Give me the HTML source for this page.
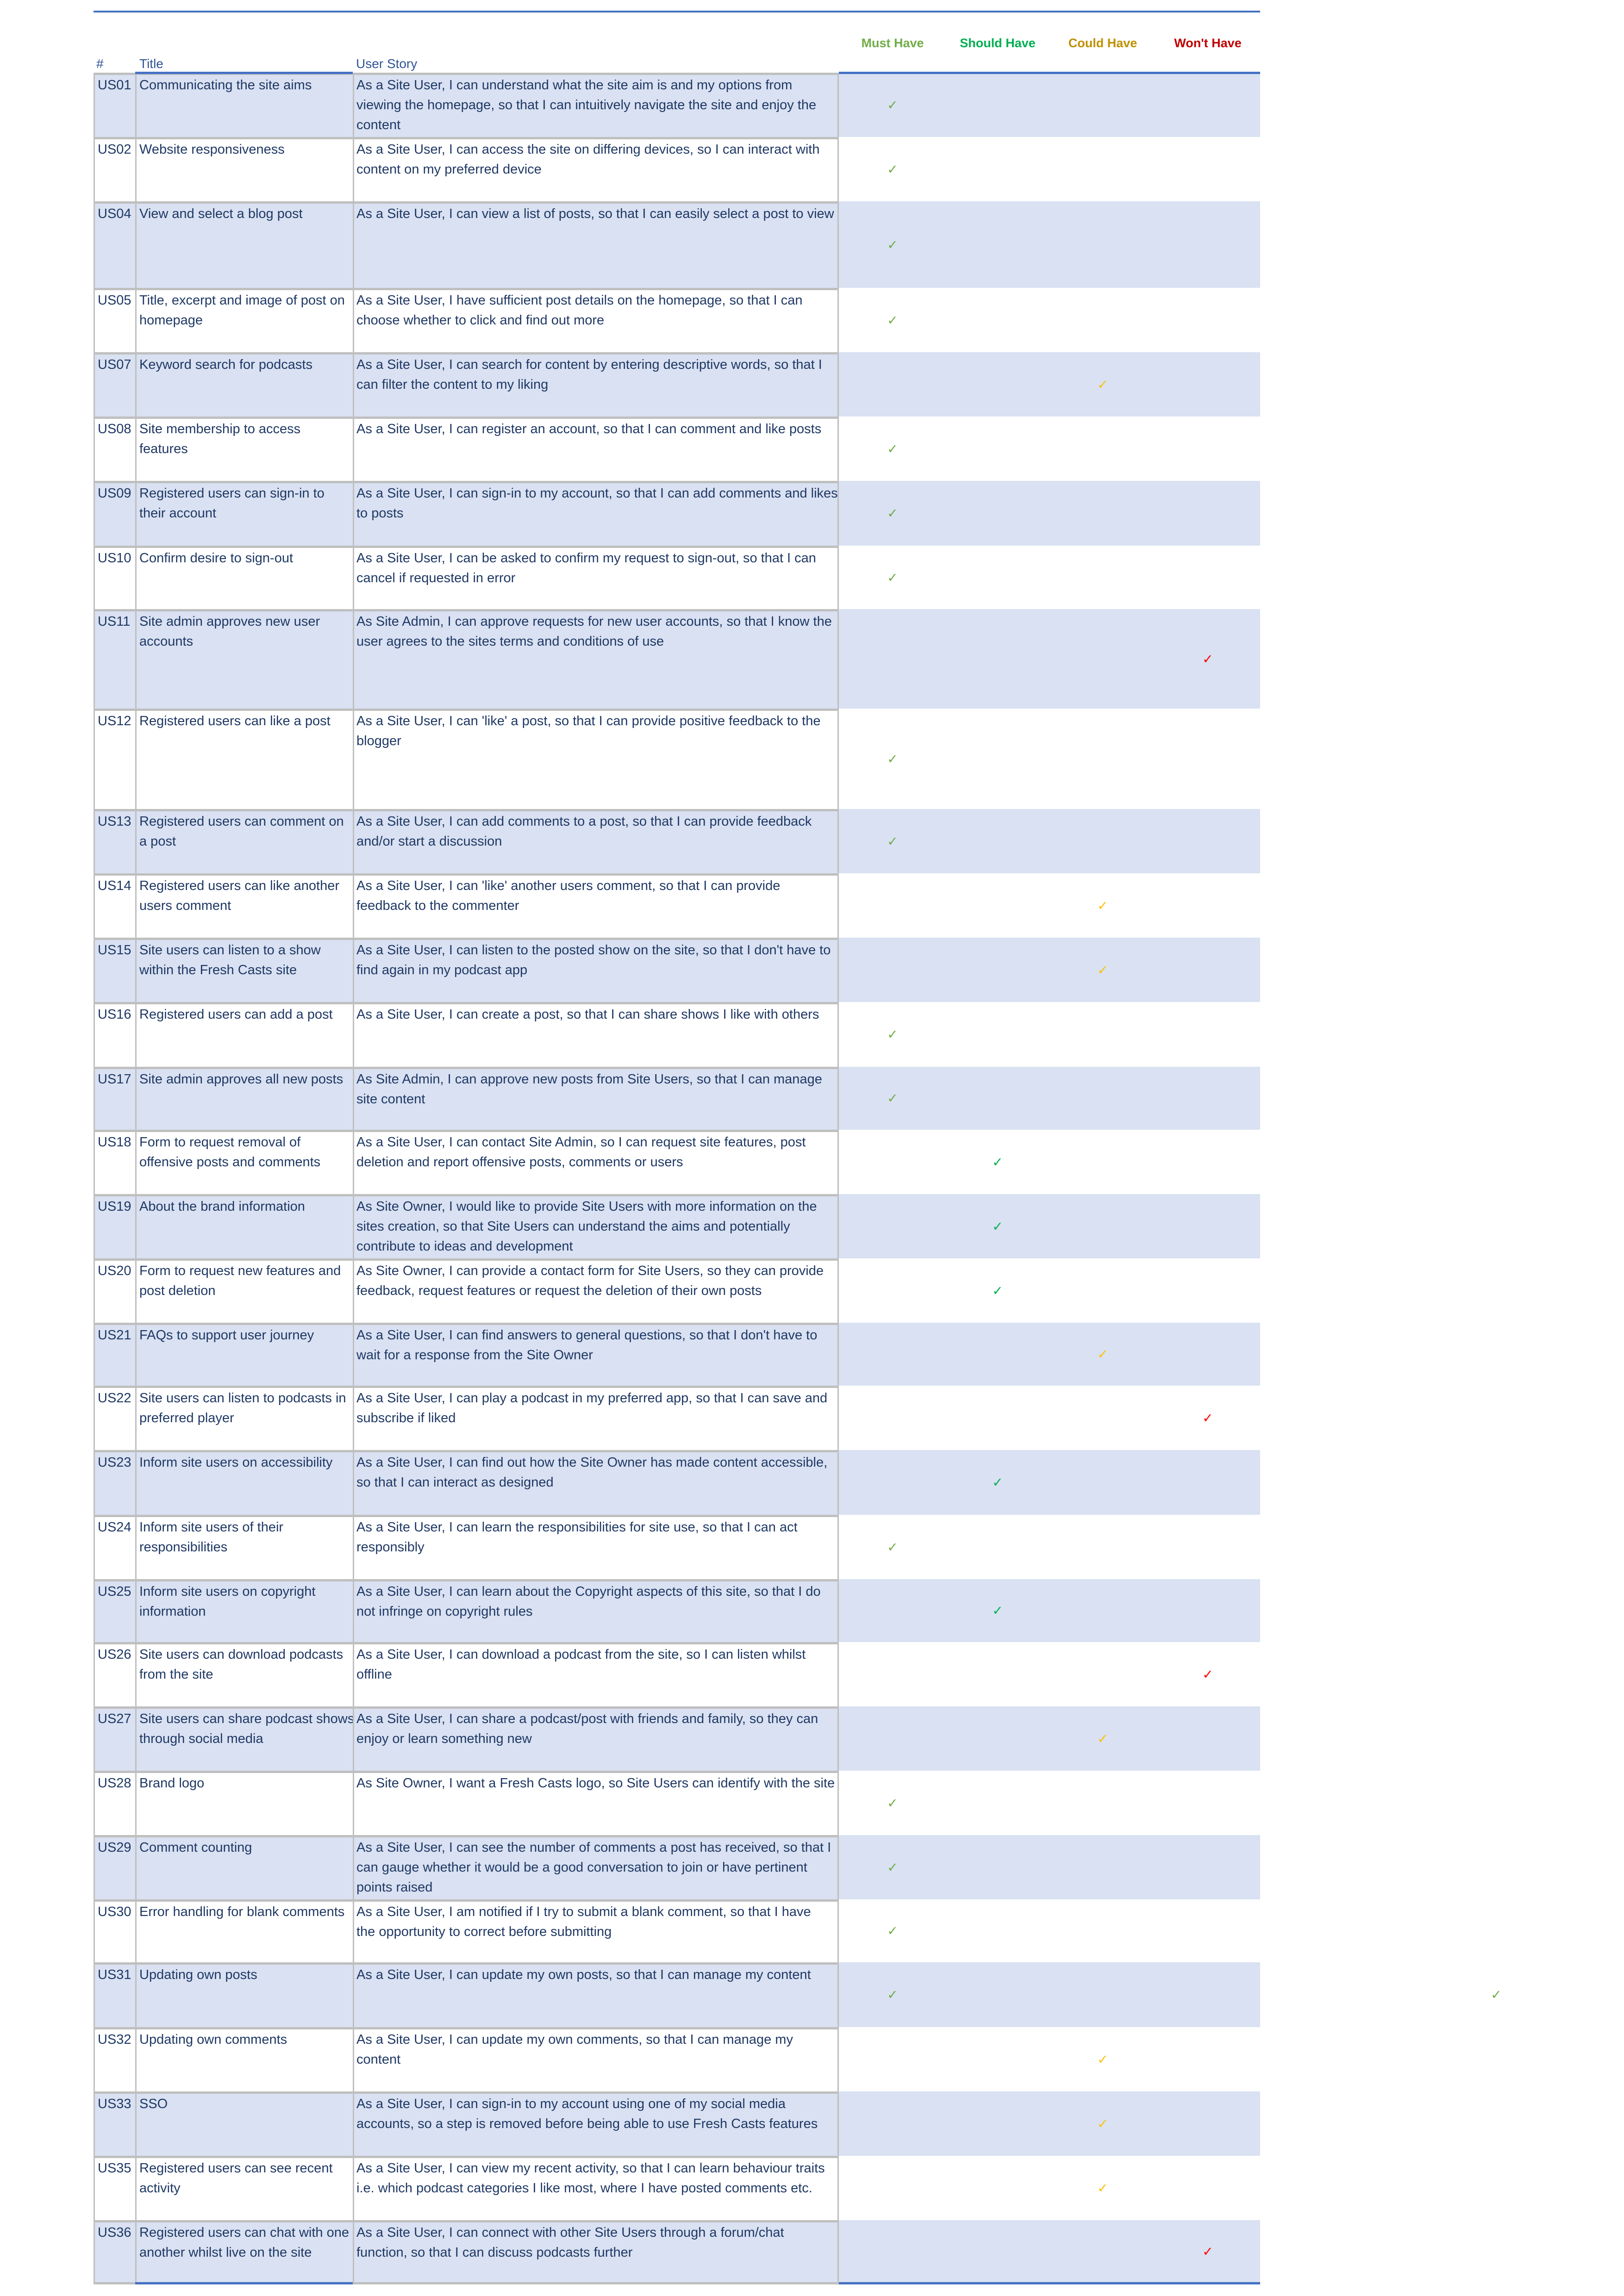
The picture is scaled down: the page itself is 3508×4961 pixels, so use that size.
<!DOCTYPE html>
<html><head><meta charset="utf-8">
<style>
html,body{margin:0;padding:0;background:#fff;}
body{width:3508px;height:4961px;position:relative;overflow:hidden;font-family:"Liberation Sans","DejaVu Sans",sans-serif;font-size:29px;color:#1F3864;}
.topline{position:absolute;left:202px;top:23px;width:2520px;height:4px;background:#4472C4;}
.h{position:absolute;top:118px;line-height:40px;color:#2F5496;white-space:nowrap;font-size:28px;}
.p{position:absolute;top:78px;font-weight:bold;transform:translateX(-50%);white-space:nowrap;font-size:27px;}
.r{position:absolute;left:202px;width:2520px;}
.s{background:#D9E1F2;}
.c{position:absolute;top:0;height:100%;box-sizing:border-box;border-top:5px solid #BFBFBF;border-left:3px solid #BFBFBF;padding-top:1px;line-height:43px;white-space:nowrap;}
.c span{display:inline-block;}
.c1{left:0;width:90px;padding-left:6px;}
.c2{left:90px;width:470px;padding-left:6px;}
.c3{left:560px;width:1050px;padding-left:5px;border-right:3px solid #BFBFBF;}
.ck{position:absolute;top:50%;transform:translate(-50%,-50%);font-family:"DejaVu Sans",sans-serif;font-size:28px;}
.m{left:1726px;color:#70AD47;}
.sh{left:1953px;color:#00B050;}
.co{left:2180px;color:#FFC000;}
.w{left:2407px;color:#FF0000;}
.bl{position:absolute;height:5px;background:#4472C4;}
.gl{position:absolute;height:5px;background:#BFBFBF;}
</style></head><body>
<div class="topline"></div>
<div class="h" style="left:208px">#</div>
<div class="h" style="left:301px">Title</div>
<div class="h" style="left:769px">User Story</div>
<div class="p" style="left:1928px;color:#70AD47">Must Have</div>
<div class="p" style="left:2155px;color:#00B050">Should Have</div>
<div class="p" style="left:2382px;color:#BF9000">Could Have</div>
<div class="p" style="left:2609px;color:#C00000">Won't Have</div>

<div class="r s" style="top:157px;height:139px"><div class="c c1"><span>US01</span></div><div class="c c2"><span>Communicating the site aims</span></div><div class="c c3"><span>As a Site User, I can understand what the site aim is and my options from<br>viewing the homepage, so that I can intuitively navigate the site and enjoy the<br>content</span></div><div class="ck m">✓</div></div>
<div class="r" style="top:296px;height:139px"><div class="c c1"><span>US02</span></div><div class="c c2"><span>Website responsiveness</span></div><div class="c c3"><span>As a Site User, I can access the site on differing devices, so I can interact with<br>content on my preferred device</span></div><div class="ck m">✓</div></div>
<div class="r s" style="top:435px;height:187px"><div class="c c1"><span>US04</span></div><div class="c c2"><span>View and select a blog post</span></div><div class="c c3"><span>As a Site User, I can view a list of posts, so that I can easily select a post to view</span></div><div class="ck m">✓</div></div>
<div class="r" style="top:622px;height:139px"><div class="c c1"><span>US05</span></div><div class="c c2"><span>Title, excerpt and image of post on<br>homepage</span></div><div class="c c3"><span>As a Site User, I have sufficient post details on the homepage, so that I can<br>choose whether to click and find out more</span></div><div class="ck m">✓</div></div>
<div class="r s" style="top:761px;height:139px"><div class="c c1"><span>US07</span></div><div class="c c2"><span>Keyword search for podcasts</span></div><div class="c c3"><span>As a Site User, I can search for content by entering descriptive words, so that I<br>can filter the content to my liking</span></div><div class="ck co">✓</div></div>
<div class="r" style="top:900px;height:139px"><div class="c c1"><span>US08</span></div><div class="c c2"><span>Site membership to access<br>features</span></div><div class="c c3"><span>As a Site User, I can register an account, so that I can comment and like posts</span></div><div class="ck m">✓</div></div>
<div class="r s" style="top:1039px;height:140px"><div class="c c1"><span>US09</span></div><div class="c c2"><span>Registered users can sign-in to<br>their account</span></div><div class="c c3"><span>As a Site User, I can sign-in to my account, so that I can add comments and likes<br>to posts</span></div><div class="ck m">✓</div></div>
<div class="r" style="top:1179px;height:137px"><div class="c c1"><span>US10</span></div><div class="c c2"><span>Confirm desire to sign-out</span></div><div class="c c3"><span>As a Site User, I can be asked to confirm my request to sign-out, so that I can<br>cancel if requested in error</span></div><div class="ck m">✓</div></div>
<div class="r s" style="top:1316px;height:215px"><div class="c c1"><span>US11</span></div><div class="c c2"><span>Site admin approves new user<br>accounts</span></div><div class="c c3"><span>As Site Admin, I can approve requests for new user accounts, so that I know the<br>user agrees to the sites terms and conditions of use</span></div><div class="ck w">✓</div></div>
<div class="r" style="top:1531px;height:217px"><div class="c c1"><span>US12</span></div><div class="c c2"><span>Registered users can like a post</span></div><div class="c c3"><span>As a Site User, I can 'like' a post, so that I can provide positive feedback to the<br>blogger</span></div><div class="ck m">✓</div></div>
<div class="r s" style="top:1748px;height:139px"><div class="c c1"><span>US13</span></div><div class="c c2"><span>Registered users can comment on<br>a post</span></div><div class="c c3"><span>As a Site User, I can add comments to a post, so that I can provide feedback<br>and/or start a discussion</span></div><div class="ck m">✓</div></div>
<div class="r" style="top:1887px;height:139px"><div class="c c1"><span>US14</span></div><div class="c c2"><span>Registered users can like another<br>users comment</span></div><div class="c c3"><span>As a Site User, I can 'like' another users comment, so that I can provide<br>feedback to the commenter</span></div><div class="ck co">✓</div></div>
<div class="r s" style="top:2026px;height:139px"><div class="c c1"><span>US15</span></div><div class="c c2"><span>Site users can listen to a show<br>within the Fresh Casts site</span></div><div class="c c3"><span>As a Site User, I can listen to the posted show on the site, so that I don't have to<br>find again in my podcast app</span></div><div class="ck co">✓</div></div>
<div class="r" style="top:2165px;height:140px"><div class="c c1"><span>US16</span></div><div class="c c2"><span>Registered users can add a post</span></div><div class="c c3"><span>As a Site User, I can create a post, so that I can share shows I like with others</span></div><div class="ck m">✓</div></div>
<div class="r s" style="top:2305px;height:136px"><div class="c c1"><span>US17</span></div><div class="c c2"><span>Site admin approves all new posts</span></div><div class="c c3"><span>As Site Admin, I can approve new posts from Site Users, so that I can manage<br>site content</span></div><div class="ck m">✓</div></div>
<div class="r" style="top:2441px;height:139px"><div class="c c1"><span>US18</span></div><div class="c c2"><span>Form to request removal of<br>offensive posts and comments</span></div><div class="c c3"><span>As a Site User, I can contact Site Admin, so I can request site features, post<br>deletion and report offensive posts, comments or users</span></div><div class="ck sh">✓</div></div>
<div class="r s" style="top:2580px;height:139px"><div class="c c1"><span>US19</span></div><div class="c c2"><span>About the brand information</span></div><div class="c c3"><span>As Site Owner, I would like to provide Site Users with more information on the<br>sites creation, so that Site Users can understand the aims and potentially<br>contribute to ideas and development</span></div><div class="ck sh">✓</div></div>
<div class="r" style="top:2719px;height:139px"><div class="c c1"><span>US20</span></div><div class="c c2"><span>Form to request new features and<br>post deletion</span></div><div class="c c3"><span>As Site Owner, I can provide a contact form for Site Users, so they can provide<br>feedback, request features or request the deletion of their own posts</span></div><div class="ck sh">✓</div></div>
<div class="r s" style="top:2858px;height:136px"><div class="c c1"><span>US21</span></div><div class="c c2"><span>FAQs to support user journey</span></div><div class="c c3"><span>As a Site User, I can find answers to general questions, so that I don't have to<br>wait for a response from the Site Owner</span></div><div class="ck co">✓</div></div>
<div class="r" style="top:2994px;height:139px"><div class="c c1"><span>US22</span></div><div class="c c2"><span>Site users can listen to podcasts in<br>preferred player</span></div><div class="c c3"><span>As a Site User, I can play a podcast in my preferred app, so that I can save and<br>subscribe if liked</span></div><div class="ck w">✓</div></div>
<div class="r s" style="top:3133px;height:140px"><div class="c c1"><span>US23</span></div><div class="c c2"><span>Inform site users on accessibility</span></div><div class="c c3"><span>As a Site User, I can find out how the Site Owner has made content accessible,<br>so that I can interact as designed</span></div><div class="ck sh">✓</div></div>
<div class="r" style="top:3273px;height:139px"><div class="c c1"><span>US24</span></div><div class="c c2"><span>Inform site users of their<br>responsibilities</span></div><div class="c c3"><span>As a Site User, I can learn the responsibilities for site use, so that I can act<br>responsibly</span></div><div class="ck m">✓</div></div>
<div class="r s" style="top:3412px;height:136px"><div class="c c1"><span>US25</span></div><div class="c c2"><span>Inform site users on copyright<br>information</span></div><div class="c c3"><span>As a Site User, I can learn about the Copyright aspects of this site, so that I do<br>not infringe on copyright rules</span></div><div class="ck sh">✓</div></div>
<div class="r" style="top:3548px;height:139px"><div class="c c1"><span>US26</span></div><div class="c c2"><span>Site users can download podcasts<br>from the site</span></div><div class="c c3"><span>As a Site User, I can download a podcast from the site, so I can listen whilst<br>offline</span></div><div class="ck w">✓</div></div>
<div class="r s" style="top:3687px;height:139px"><div class="c c1"><span>US27</span></div><div class="c c2"><span>Site users can share podcast shows<br>through social media</span></div><div class="c c3"><span>As a Site User, I can share a podcast/post with friends and family, so they can<br>enjoy or learn something new</span></div><div class="ck co">✓</div></div>
<div class="r" style="top:3826px;height:139px"><div class="c c1"><span>US28</span></div><div class="c c2"><span>Brand logo</span></div><div class="c c3"><span>As Site Owner, I want a Fresh Casts logo, so Site Users can identify with the site</span></div><div class="ck m">✓</div></div>
<div class="r s" style="top:3965px;height:139px"><div class="c c1"><span>US29</span></div><div class="c c2"><span>Comment counting</span></div><div class="c c3"><span>As a Site User, I can see the number of comments a post has received, so that I<br>can gauge whether it would be a good conversation to join or have pertinent<br>points raised</span></div><div class="ck m">✓</div></div>
<div class="r" style="top:4104px;height:136px"><div class="c c1"><span>US30</span></div><div class="c c2"><span>Error handling for blank comments</span></div><div class="c c3"><span>As a Site User, I am notified if I try to submit a blank comment, so that I have<br>the opportunity to correct before submitting</span></div><div class="ck m">✓</div></div>
<div class="r s" style="top:4240px;height:140px"><div class="c c1"><span>US31</span></div><div class="c c2"><span>Updating own posts</span></div><div class="c c3"><span>As a Site User, I can update my own posts, so that I can manage my content</span></div><div class="ck m">✓</div></div>
<div class="ck" style="position:absolute;left:3232px;top:4310px;color:#70AD47;">✓</div>
<div class="r" style="top:4380px;height:139px"><div class="c c1"><span>US32</span></div><div class="c c2"><span>Updating own comments</span></div><div class="c c3"><span>As a Site User, I can update my own comments, so that I can manage my<br>content</span></div><div class="ck co">✓</div></div>
<div class="r s" style="top:4519px;height:139px"><div class="c c1"><span>US33</span></div><div class="c c2"><span>SSO</span></div><div class="c c3"><span>As a Site User, I can sign-in to my account using one of my social media<br>accounts, so a step is removed before being able to use Fresh Casts features</span></div><div class="ck co">✓</div></div>
<div class="r" style="top:4658px;height:139px"><div class="c c1"><span>US35</span></div><div class="c c2"><span>Registered users can see recent<br>activity</span></div><div class="c c3"><span>As a Site User, I can view my recent activity, so that I can learn behaviour traits<br>i.e. which podcast categories I like most, where I have posted comments etc.</span></div><div class="ck co">✓</div></div>
<div class="r s" style="top:4797px;height:136px"><div class="c c1"><span>US36</span></div><div class="c c2"><span>Registered users can chat with one<br>another whilst live on the site</span></div><div class="c c3"><span>As a Site User, I can connect with other Site Users through a forum/chat<br>function, so that I can discuss podcasts further</span></div><div class="ck w">✓</div></div>

<div class="bl" style="left:292px;width:470px;top:155px"></div>
<div class="bl" style="left:1812px;width:910px;top:155px"></div>
<div class="gl" style="left:202px;width:90px;top:4931px"></div>
<div class="bl" style="left:292px;width:470px;top:4931px"></div>
<div class="gl" style="left:762px;width:1050px;top:4931px"></div>
<div class="bl" style="left:1812px;width:910px;top:4931px"></div>
</body></html>
